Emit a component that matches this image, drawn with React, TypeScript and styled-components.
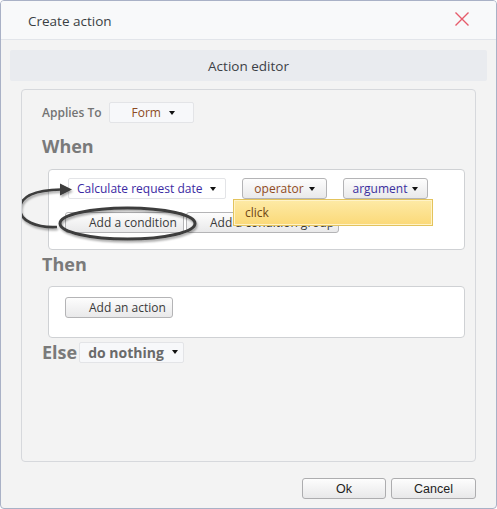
import React from "react";
import styled, { createGlobalStyle } from "styled-components";

const Global = createGlobalStyle`
  html, body { margin: 0; padding: 0; background: #ffffff; }
  body { font-family: "Open Sans", "Noto Sans", sans-serif; }
  * { box-sizing: border-box; }
`;

const Dialog = styled.div`
  position: relative;
  width: 497px;
  height: 509px;
  border: 1px solid #a9b1c6;
  border-radius: 4px;
  background: #f3f3f3;
  display: flex;
  flex-direction: column;
  overflow: hidden;
`;

const Header = styled.div`
  height: 39px;
  flex: none;
  background: #f8f9fa;
  border-bottom: 1px solid #e2e5ea;
  display: flex;
  align-items: center;
  justify-content: space-between;
  padding: 0 26px 0 27px;
`;

const Title = styled.div`
  font-size: 13.5px;
  color: #3a3f44;
  margin-top: 1px;
`;

const CloseBtn = styled.div`
  width: 16px;
  height: 16px;
  display: flex;
  margin-top: -3px;
`;

const Body = styled.div`
  flex: 1;
  display: flex;
  flex-direction: column;
  padding: 10px 9px 0 9px;
`;

const EditorBar = styled.div`
  height: 31px;
  background: #e9ebef;
  border-radius: 2px;
  display: flex;
  align-items: center;
  justify-content: center;
  font-size: 13.5px;
  color: #3c4046;
`;

const Panel = styled.div`
  position: relative;
  margin: 8px 11px 0 11px;
  height: 373px;
  border: 1px solid #d6d8dc;
  border-radius: 4px;
  padding: 12px 10px 0 20px;
  display: flex;
  flex-direction: column;
`;

const Row = styled.div<{ $gap?: number }>`
  display: flex;
  align-items: center;
  gap: ${(p) => p.$gap ?? 8}px;
`;

const Label = styled.span`
  font-size: 12px;
  font-weight: 600;
  color: #747474;
`;

const Heading = styled.div<{ $mt: number }>`
  font-size: 18px;
  font-weight: 700;
  color: #7a7a7a;
  line-height: 24px;
  margin-top: ${(p) => p.$mt}px;
`;

const Box = styled.div<{ $h: number; $mt: number }>`
  position: relative;
  margin: ${(p) => p.$mt}px 0 0 6px;
  height: ${(p) => p.$h}px;
  background: #ffffff;
  border: 1px solid #cfd1d4;
  border-radius: 4px;
  padding: 8px 0 0 19px;
  display: flex;
  flex-direction: column;
`;

const Caret = styled.span`
  width: 0;
  height: 0;
  border-left: 3px solid transparent;
  border-right: 3px solid transparent;
  border-top: 4px solid #111;
  flex: none;
`;

const Select = styled.div<{ $w: number; $color: string; $bold?: boolean; $bg?: string; $pl: number }>`
  width: ${(p) => p.$w}px;
  height: 21px;
  display: flex;
  align-items: center;
  gap: 8px;
  padding-left: ${(p) => p.$pl}px;
  background: ${(p) => p.$bg ?? "#ffffff"};
  border: 1px solid #e3e4e7;
  border-radius: 2px;
  font-size: ${(p) => (p.$bold ? 14 : 12)}px;
  font-weight: ${(p) => (p.$bold ? 700 : 400)};
  color: ${(p) => p.$color};
  white-space: nowrap;
`;

const OpButton = styled.div<{ $w: number; $color: string }>`
  width: ${(p) => p.$w}px;
  height: 21px;
  display: flex;
  align-items: center;
  justify-content: center;
  gap: 5px;
  background: linear-gradient(#fdfdfd, #e9e9ea);
  border: 1px solid #b4b4b6;
  border-radius: 3px;
  font-size: 12px;
  color: ${(p) => p.$color};
`;

const AddButton = styled.div<{ $w: number }>`
  width: ${(p) => p.$w}px;
  height: 21px;
  display: flex;
  align-items: center;
  padding-left: 23px;
  background: linear-gradient(#fdfdfd, #e9e9ea);
  border: 1px solid #b4b4b6;
  border-radius: 3px;
  font-size: 12px;
  color: #3a3a3a;
  white-space: nowrap;
  overflow: hidden;
`;

const Popup = styled.div`
  position: absolute;
  left: 184px;
  top: 29px;
  width: 200px;
  height: 27px;
  background: linear-gradient(#fdeaa6, #fbd978);
  border: 1px solid #e3c35c;
  box-shadow: inset 0 0 0 1px #fff3c8;
  display: flex;
  align-items: center;
  padding-left: 11px;
  font-size: 12px;
  color: #6e4714;
`;

const Overlay = styled.svg`
  position: absolute;
  left: 0;
  top: 0;
  pointer-events: none;
`;

const Footer = styled.div`
  flex: 1;
  display: flex;
  justify-content: flex-end;
  align-items: flex-start;
  gap: 5px;
  padding: 16px 11px 0 0;
`;

const FootButton = styled.div<{ $w: number }>`
  width: ${(p) => p.$w}px;
  height: 21px;
  display: flex;
  align-items: center;
  justify-content: center;
  background: linear-gradient(#fdfdfd, #e8e8e9);
  border: 1px solid #adadaf;
  border-radius: 3px;
  font-family: "Liberation Sans", Arial, sans-serif;
  font-size: 12.5px;
  color: #1e1e1e;
`;

export default function App() {
  return (
    <>
      <Global />
      <Dialog>
        <Header>
          <Title>Create action</Title>
          <CloseBtn>
            <svg width="16" height="16" viewBox="0 0 16 16">
              <path d="M1.5 1.5 L14.5 14.5 M14.5 1.5 L1.5 14.5" stroke="#e65b6b" strokeWidth="1.4" />
            </svg>
          </CloseBtn>
        </Header>
        <Body>
          <EditorBar>Action editor</EditorBar>
          <Panel>
            <Row $gap={7}>
              <Label>Applies To</Label>
              <Select $w={85} $color="#8d4a22" $bg="#f7f8fa" $pl={22}>
                Form <Caret />
              </Select>
            </Row>
            <Heading $mt={11}>When</Heading>
            <Box $h={81} $mt={11}>
              <Row $gap={16}>
                <Select $w={158} $color="#3b2aa3" $pl={8}>
                  Calculate request date <Caret />
                </Select>
                <OpButton $w={85} $color="#8f4a1c">
                  operator <Caret />
                </OpButton>
                <OpButton $w={85} $color="#3b2f9e">
                  argument <Caret />
                </OpButton>
              </Row>
              <Row $gap={2} style={{ marginTop: 13, marginLeft: -3 }}>
                <AddButton $w={119}>Add a condition</AddButton>
                <AddButton $w={153}>Add a condition group</AddButton>
              </Row>
              <Popup>click</Popup>
            </Box>
            <Heading $mt={2}>Then</Heading>
            <Box $h={52} $mt={10}>
              <Row style={{ marginTop: 2, marginLeft: -3 }}>
                <AddButton $w={108}>Add an action</AddButton>
              </Row>
            </Box>
            <Row $gap={2} style={{ marginTop: 2 }}>
              <Heading $mt={0}>Else</Heading>
              <Select $w={105} $color="#6a6a6a" $bold $bg="#f7f8fa" $pl={8}>
                do nothing <Caret />
              </Select>
            </Row>
            <Overlay width="454" height="372" viewBox="0 0 454 372">
              <defs>
                <filter id="sh" x="-10%" y="-30%" width="120%" height="160%">
                  <feGaussianBlur in="SourceAlpha" stdDeviation="1.2" />
                  <feOffset dx="1" dy="2" result="b" />
                  <feComponentTransfer>
                    <feFuncA type="linear" slope="0.35" />
                  </feComponentTransfer>
                  <feMerge>
                    <feMergeNode />
                    <feMergeNode in="SourceGraphic" />
                  </feMerge>
                </filter>
              </defs>
              <g filter="url(#sh)" transform="translate(-21 -89)">
                <ellipse cx="126.5" cy="222.5" rx="67.5" ry="15.5" fill="none" stroke="#3c3c3c" strokeWidth="3" />
                <path
                  d="M56 226 C 36 227, 18 220, 19 207 C 20 194, 38 189, 60 188.5"
                  fill="none"
                  stroke="#3c3c3c"
                  strokeWidth="2.6"
                />
                <polygon points="71,188.5 59,182.5 59,194.5" fill="#3c3c3c" />
              </g>
            </Overlay>
          </Panel>
          <Footer>
            <FootButton $w={84}>Ok</FootButton>
            <FootButton $w={85}>Cancel</FootButton>
          </Footer>
        </Body>
      </Dialog>
    </>
  );
}
